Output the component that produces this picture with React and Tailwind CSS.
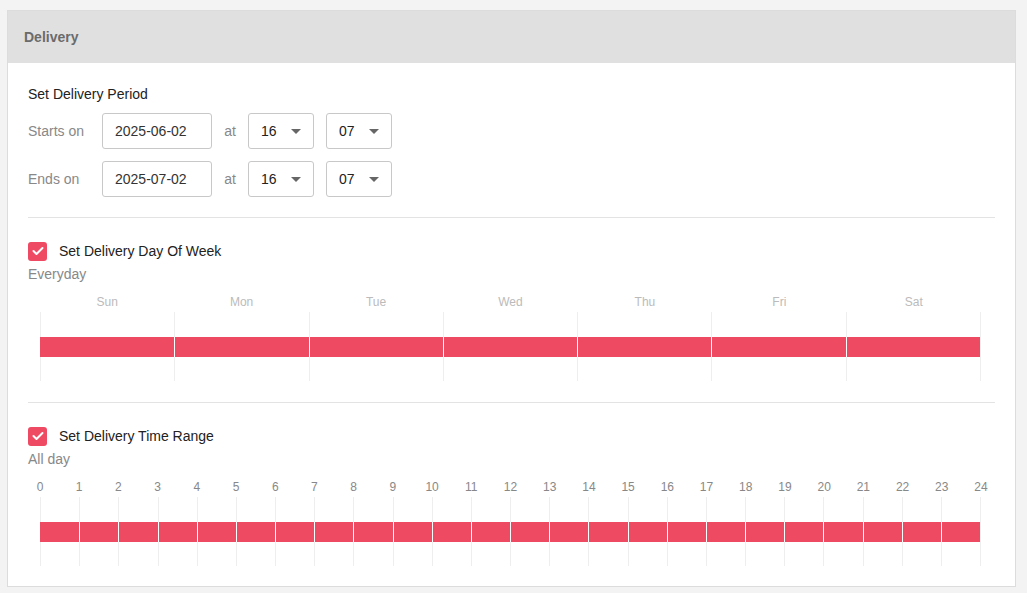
import React from 'react';

const days = ['Sun', 'Mon', 'Tue', 'Wed', 'Thu', 'Fri', 'Sat'];
const hours = Array.from({ length: 25 }, (_, i) => i);

const Caret = () => (
  <svg width="10" height="5" viewBox="0 0 10 5" className="fill-[#666]">
    <path d="M0 0h10L5 5z" />
  </svg>
);

const Select = ({ value }) => (
  <div className="w-[66px] h-[36px] border border-[#c8c8c8] rounded-[3px] flex items-center justify-between pl-[12px] pr-[12px] text-[#222]">
    <span>{value}</span>
    <Caret />
  </div>
);

const PeriodRow = ({ label, date }) => (
  <div className="flex items-center h-[36px]">
    <span className="w-[74px] text-[#888]">{label}</span>
    <div className="w-[110px] h-[36px] border border-[#c8c8c8] rounded-[3px] flex items-center pl-[12px] text-[#333]">{date}</div>
    <span className="w-[36px] text-center text-[#888]">at</span>
    <Select value="16" />
    <div className="w-[12px]" />
    <Select value="07" />
  </div>
);

const Check = ({ label }) => (
  <div className="flex items-center gap-[12px] h-[20px]">
    <div className="w-[19px] h-[19px] rounded-[3px] bg-[#ef4a63] flex items-center justify-center">
      <svg width="12" height="10" viewBox="0 0 12 10" fill="none" stroke="white" strokeWidth="2" strokeLinecap="round" strokeLinejoin="round">
        <path d="M1.5 5l3 3 6-6" />
      </svg>
    </div>
    <span className="text-[#222]">{label}</span>
  </div>
);

export default function App() {
  return (
    <div className="min-h-screen bg-[#f3f3f3] pt-[10px] px-[7px] pb-[8px] text-[14px]" style={{ fontFamily: '"Liberation Sans", Arial, sans-serif' }}>
      <div className="bg-white border border-[#dcdcdc] w-[1009px]">
        <div className="h-[52px] bg-[#e0e0e0] flex items-center px-[16px] font-bold text-[#6b6b6b]">Delivery</div>
        <div className="px-[20px] pt-[22px] pb-[20px]">
          <div className="text-[#222] h-[18px] leading-[18px]">Set Delivery Period</div>
          <div className="mt-[10px] flex flex-col gap-[12px]">
            <PeriodRow label="Starts on" date="2025-06-02" />
            <PeriodRow label="Ends on" date="2025-07-02" />
          </div>
          <div className="mt-[20px] border-t border-[#e3e3e3]" />

          <div className="mt-[23px]"><Check label="Set Delivery Day Of Week" /></div>
          <div className="mt-[3px] text-[#888]">Everyday</div>
          <div className="ml-[12px] w-[941px] mt-[8px]">
            <div className="grid grid-cols-7 text-[12px] text-[#bbb] h-[18px]">
              {days.map(d => <div key={d} className="text-center">{d}</div>)}
            </div>
            <div className="relative h-[69px] grid grid-cols-7 border-r border-[#eee] mt-[1px]">
              {days.map(d => <div key={d} className="border-l border-[#eee]" />)}
              <div className="absolute left-0 right-0 top-[25px] h-[20px] grid grid-cols-7">
                {days.map((d, i) => <div key={d} className={`bg-[#ee4a62] ${i ? 'border-l border-white' : ''}`} />)}
              </div>
            </div>
          </div>
          <div className="mt-[21px] border-t border-[#e3e3e3]" />

          <div className="mt-[23px]"><Check label="Set Delivery Time Range" /></div>
          <div className="mt-[3px] text-[#888]">All day</div>
          <div className="ml-[12px] w-[941px] mt-[8px]">
            <div className="relative h-[18px] text-[12px] text-[#888]">
              {hours.map(h => (
                <span key={h} className="absolute -translate-x-1/2" style={{ left: `${(h / 24) * 100}%` }}>{h}</span>
              ))}
            </div>
            <div className="relative h-[69px] grid grid-cols-24 border-r border-[#eee] mt-[1px]">
              {hours.slice(0, 24).map(h => <div key={h} className="border-l border-[#eee]" />)}
              <div className="absolute left-0 right-0 top-[25px] h-[20px] grid grid-cols-24">
                {hours.slice(0, 24).map(h => <div key={h} className={`bg-[#ee4a62] ${h ? 'border-l border-white' : ''}`} />)}
              </div>
            </div>
          </div>
        </div>
      </div>
    </div>
  );
}
